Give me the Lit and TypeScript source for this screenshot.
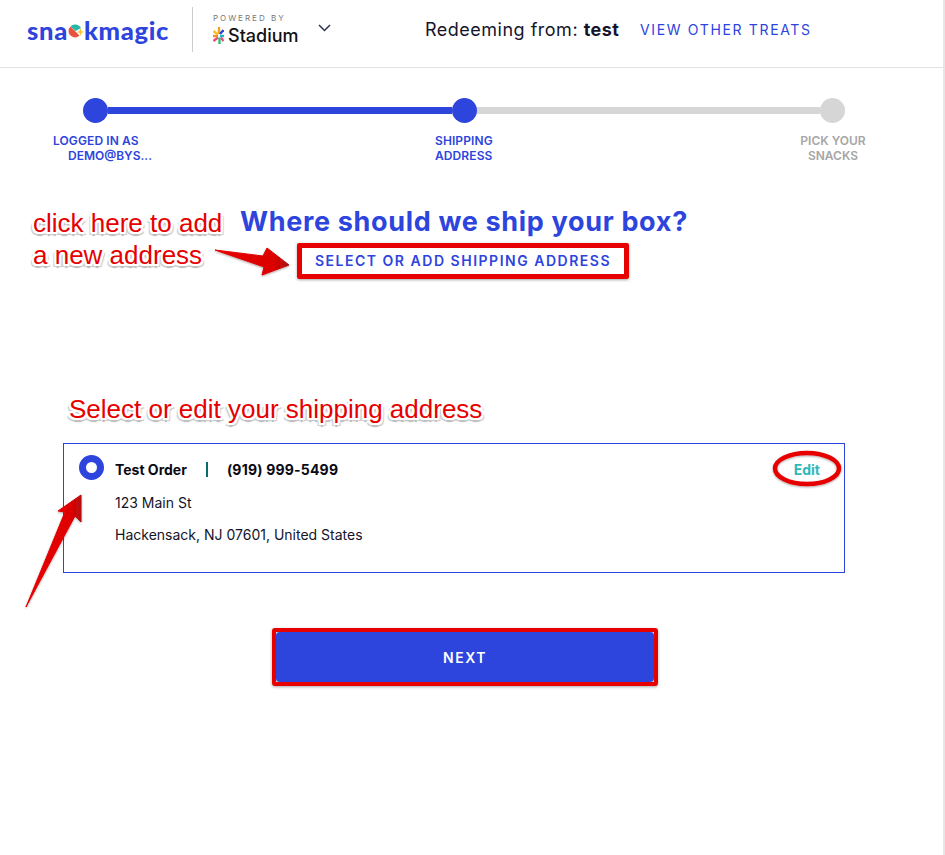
import { LitElement, html, css } from "lit";
import { customElement } from "lit/decorators.js";

@customElement("app-root")
export class AppRoot extends LitElement {
  static styles = css`
    :host {
      display: block;
      position: relative;
      width: 945px;
      height: 855px;
      box-sizing: border-box;
      border-right: 2px solid #e6e6e6;
      background: #fff;
      font-family: "Inter", "Noto Sans", sans-serif;
      color: #14142b;
      overflow: hidden;
    }
    .header {
      box-sizing: border-box;
      height: 68px;
      border-bottom: 1px solid #e2e2e2;
      display: flex;
      align-items: center;
      padding: 0 0 8px 27px;
    }
    .logo {
      display: flex;
      align-items: center;
      font-family: "Lato", sans-serif;
      font-weight: 900;
      font-size: 25.5px;
      letter-spacing: 0.7px;
      color: #2d44dd;
      width: 165px;
    }
    .logo svg { margin: 2px 0 0 0; }
    .vdiv { width: 1px; height: 45px; background: #ccc; }
    .powered { margin-left: 20px; width: 105px; }
    .powered small {
      display: block;
      font-size: 8px;
      letter-spacing: 2px;
      color: #777;
      line-height: 12px;
    }
    .stadium { display: flex; align-items: center; gap: 4px; font-size: 18px; font-weight: 500; color: #111; line-height: 24px; }
    .chev { margin-right: 94px; margin-top: -4px; }
    .redeem { font-size: 18px; letter-spacing: 0.5px; width: 215px; white-space: nowrap; }
    .redeem b { font-weight: 700; }
    .view { font-size: 14px; letter-spacing: 1.65px; color: #2d44dd; white-space: nowrap; }

    .track { display: flex; align-items: center; margin: 30px 0 0 83px; width: 762px; }
    .dot { width: 25px; height: 25px; border-radius: 50%; background: #2d44dd; flex: none; }
    .dot.off { background: #d6d6d6; }
    .line { flex: 1; height: 7px; background: #2d44dd; }
    .line.off { background: #d6d6d6; }

    .labels {
      display: grid;
      grid-template-columns: 382px 365px 70px;
      margin: 10px 0 0 53px;
      font-size: 12px;
      font-weight: 600;
      line-height: 15px;
      letter-spacing: 0.1px;
      color: #2d44dd;
      white-space: nowrap;
    }
    .labels .indent { display: block; padding-left: 15px; letter-spacing: 0; }
    .labels .off { color: #a6a6a6; text-align: center; width: 66px; letter-spacing: 0; }

    h1 {
      margin: 41px 0 0;
      padding-left: 240px;
      font-size: 27px;
      line-height: 36px;
      font-weight: 700;
      color: #2d44dd;
      letter-spacing: 0.67px;
      white-space: nowrap;
    }
    .select {
      box-sizing: border-box;
      width: 332px;
      height: 36px;
      margin: 3px 0 0 297px;
      padding-bottom: 2px;
      border: 5px solid #e60000;
      box-shadow: 0 1px 3px rgba(0,0,0,.35);
      border-radius: 2px;
      display: flex;
      align-items: center;
      justify-content: center;
      font-size: 14px;
      font-weight: 600;
      letter-spacing: 1.52px;
      color: #2d44dd;
      white-space: nowrap;
    }

    .card {
      box-sizing: border-box;
      width: 782px;
      height: 130px;
      margin: 164px 0 0 63px;
      border: 1px solid #2d44dd;
      position: relative;
      display: flex;
      padding: 11px 15px;
      gap: 11px;
    }
    .radio {
      width: 25px;
      height: 25px;
      box-sizing: border-box;
      border-radius: 50%;
      border: 7.5px solid #2d44dd;
      background: #fff;
      flex: none;
    }
    .info { flex: 1; font-size: 14px; color: #14142b; }
    .row1 { display: flex; align-items: center; height: 28px; font-weight: 700; color: #0a0a14; }
    .sep { width: 2px; height: 15px; background: #0b6a70; margin: 0 19px 0 19px; }
    .phone { letter-spacing: 0.2px; }
    .info p { margin: 0; height: 32px; line-height: 32px; }
    .row1 + p { margin-top: 4px; }
    .edit { font-size: 14px; font-weight: 700; color: #2fb8bc; margin: 6px 9px 0 0; }

    .next {
      box-sizing: border-box;
      width: 386px;
      height: 58px;
      margin: 55px 0 0 272px;
      border: 4px solid #e60000;
      border-radius: 3px;
      box-shadow: 0 1px 3px rgba(0,0,0,.35);
      background: #cfcfcf;
      display: flex;
    }
    .next span {
      flex: 1;
      background: #2d44dd;
      border-radius: 4px;
      color: #fff;
      display: flex;
      align-items: center;
      justify-content: center;
      font-size: 14px;
      font-weight: 600;
      letter-spacing: 1.5px;
    }

    .note {
      position: absolute;
      font-family: "Liberation Sans", Arial, sans-serif;
      font-size: 26px;
      line-height: 32px;
      color: #e60000;
      white-space: nowrap;
      text-shadow:
        2px 0 0 #fff, -2px 0 0 #fff, 0 2px 0 #fff, 0 -2px 0 #fff,
        2px 2px 0 #fff, -2px 2px 0 #fff, 2px -2px 0 #fff, -2px -2px 0 #fff,
        3px 3px 1px #c4c4c4, -3px 3px 1px #c4c4c4, 0 4px 1px #b5b5b5;
    }
    .n1 { left: 33px; top: 207px; }
    .n2 { left: 69px; top: 393px; }
    .overlay { position: absolute; left: 0; top: 0; pointer-events: none; }
  `;

  render() {
    return html`
      <div class="header">
        <div class="logo">
          <span>sna</span>
          <svg width="16" height="15" viewBox="0 0 16 15">
            <path d="M0.5 8 A6.5 6.5 0 0 0 11.5 12.5 L2.5 3.5 A6.5 6.5 0 0 0 0.5 8Z" fill="#e8533f" />
            <path d="M2.5 3.5 A6.5 6.5 0 0 1 13 5 L7.5 8Z" fill="#25b8a6" />
            <path d="M12.5 5 L13.4 8 L16 9 L13.4 10 L12.5 13 L11.6 10 L9 9 L11.6 8Z" fill="#f5c431" />
          </svg>
          <span>kmagic</span>
        </div>
        <div class="vdiv"></div>
        <div class="powered">
          <small>POWERED BY</small>
          <div class="stadium">
            <svg width="11" height="17" viewBox="0 0 11 17" fill="none" stroke-width="2.4">
              <path d="M6 0 V7" stroke="#f4a11e" />
              <path d="M0.5 4 L5 7.5" stroke="#f6c12e" />
              <path d="M10.5 3 L7 7" stroke="#2d44dd" />
              <path d="M0 9 H5" stroke="#f0912a" />
              <path d="M7 9 H11" stroke="#20b8c4" />
              <path d="M0.5 14 L5 10.5" stroke="#ee4d7a" />
              <path d="M6.5 10.5 V17" stroke="#2cc36b" />
              <path d="M8 10.5 L10.5 14" stroke="#e84a8a" />
            </svg>
            <span>Stadium</span>
          </div>
        </div>
        <svg class="chev" width="13" height="8" viewBox="0 0 13 8">
          <path d="M1 1 L6.5 6.5 L12 1" fill="none" stroke="#2b3350" stroke-width="1.5" />
        </svg>
        <div class="redeem">Redeeming from: <b>test</b></div>
        <div class="view">VIEW OTHER TREATS</div>
      </div>

      <div class="track">
        <div class="dot"></div>
        <div class="line"></div>
        <div class="dot"></div>
        <div class="line off"></div>
        <div class="dot off"></div>
      </div>
      <div class="labels">
        <div>LOGGED IN AS<span class="indent">DEMO@BYS...</span></div>
        <div>SHIPPING<br />ADDRESS</div>
        <div class="off">PICK YOUR<br />SNACKS</div>
      </div>

      <h1>Where should we ship your box?</h1>
      <div class="select">SELECT OR ADD SHIPPING ADDRESS</div>

      <div class="card">
        <div class="radio"></div>
        <div class="info">
          <div class="row1"><span>Test Order</span><span class="sep"></span><span class="phone">(919) 999-5499</span></div>
          <p>123 Main St</p>
          <p>Hackensack, NJ 07601, United States</p>
        </div>
        <div class="edit">Edit</div>
      </div>

      <div class="next"><span>NEXT</span></div>

      <div class="note n1">click here to add<br />a new address</div>
      <div class="note n2">Select or edit your shipping address</div>

      <svg class="overlay" width="945" height="855" viewBox="0 0 945 855">
        <defs>
          <linearGradient id="a1" x1="0" y1="0" x2="1" y2="0">
            <stop offset="0" stop-color="#e60000" />
            <stop offset="0.8" stop-color="#dc0303" />
            <stop offset="1" stop-color="#a80c0c" />
          </linearGradient>
          <linearGradient id="a2" x1="0" y1="0" x2="1" y2="0">
            <stop offset="0" stop-color="#e60000" />
            <stop offset="0.8" stop-color="#e00202" />
            <stop offset="1" stop-color="#b50a0a" />
          </linearGradient>
          <filter id="sh" x="-20%" y="-20%" width="140%" height="140%">
            <feDropShadow dx="0" dy="1" stdDeviation="1" flood-color="#000" flood-opacity=".35" />
          </filter>
        </defs>
        <path d="M215 250 L263 256 L267 248 L289 265 L262 275 L264 267 Z" fill="url(#a1)" stroke="url(#a1)" stroke-linejoin="round" filter="url(#sh)" />
        <path d="M26 607 L65 512 L58 511 L81 495 L81 522 L75 516 Z" fill="url(#a2)" stroke="url(#a2)" stroke-linejoin="round" filter="url(#sh)" />
        <ellipse cx="807" cy="468.5" rx="32" ry="15.5" fill="none" stroke="#e60000" stroke-width="4.5" filter="url(#sh)" />
      </svg>
    `;
  }
}
